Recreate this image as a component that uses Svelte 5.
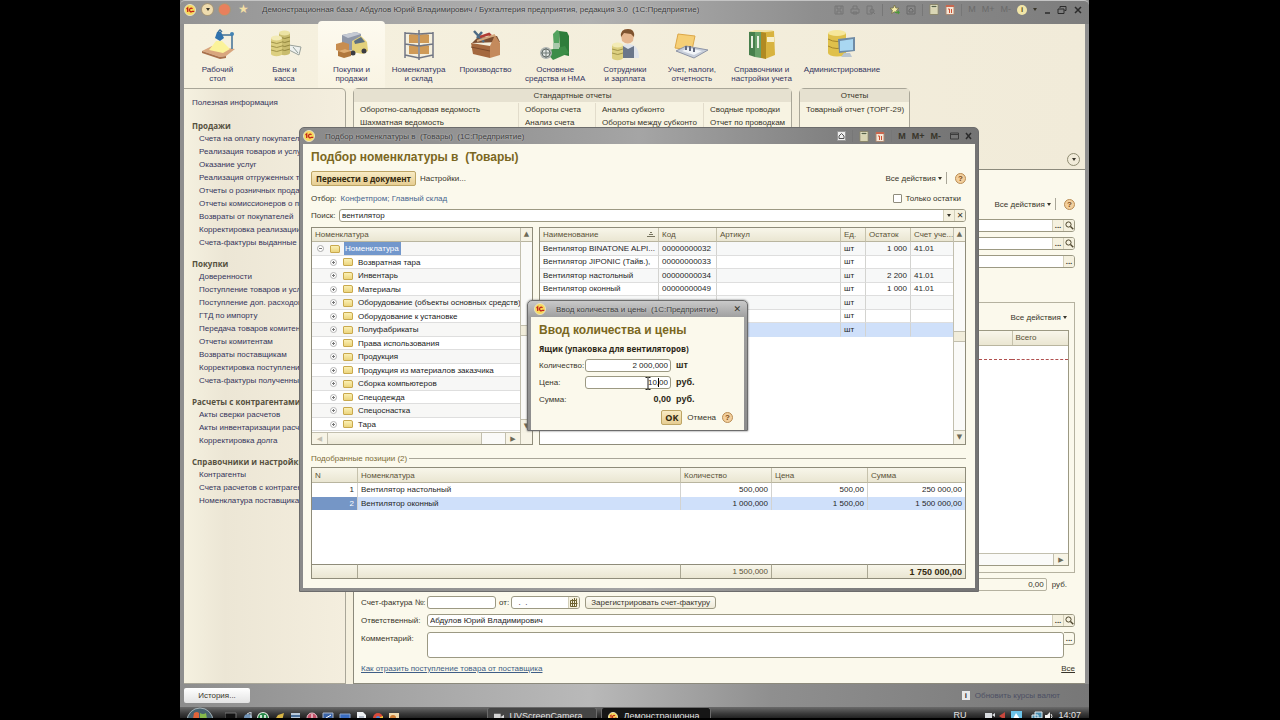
<script>
	const sections = [
		{
			label: ['Рабочий', 'стол'],
			icon: '<path d="M2 22l10-5 23 3-9 7-6 1z" fill="#d9a67e"/><path d="M2 22l18 6 6-1v2l-6 1-18-6z" fill="#a8704c"/><path d="M9 21l7-9h6l8 8-7 4z" fill="#fbf39a"/><path d="M15 9l2-6h4l3 6-4 3z" fill="#2f72ad"/><path d="M18 3l2-2 2 2M22 6h10v14" fill="none" stroke="#3f6f96" stroke-width="1.5"/><circle cx="32" cy="5" r="2" fill="#4383b4"/>'
		},
		{
			label: ['Банк и', 'касса'],
			icon: '<path d="M22 16l12 2-2 8-10-5z" fill="#eef1ee" stroke="#98a09a"/><path d="M26 18l5 6" stroke="#8d9c96"/><path d="M12 4v20a5 2 0 0 0 11 0V4z" fill="#c9bc6e"/><ellipse cx="17.500" cy="4" rx="5.500" ry="2.500" fill="#ece3a3"/><path d="M12 8q6 3 11 0M12 12q6 3 11 0M12 16q6 3 11 0M12 20q6 3 11 0" fill="none" stroke="#94883f"/><path d="M4 9v16a5 2 0 0 0 11 0V9z" fill="#dccf80"/><ellipse cx="9.500" cy="9" rx="5.500" ry="2.500" fill="#f3ebb6"/><path d="M4 13q6 3 11 0M4 17q6 3 11 0M4 21q6 3 11 0" fill="none" stroke="#a2954b"/>'
		},
		{
			label: ['Покупки и', 'продажи'],
			icon: '<path d="M8 6l14-3 5 2v18l-19-3z" fill="#8f97a8"/><path d="M8 6l14-3 5 2-13 4z" fill="#c5cad4"/><path d="M18 12l9-5 6 6 1 9-5 3-11-2z" fill="#e3d17c"/><path d="M20 12l7-4 4 5-10 2z" fill="#5d6f80"/><circle cx="30" cy="22" r="2.500" fill="#3b3b42"/><circle cx="19" cy="24" r="2.500" fill="#3b3b42"/><path d="M2 15l7-2 6 2v6l-7 2-6-2z" fill="#c88d4f"/><path d="M4 22l7-2 6 2v5l-7 2-6-2z" fill="#b0773c"/><path d="M4 22l7-2 6 2-7 2z" fill="#dfae74"/>'
		},
		{
			label: ['Номенклатура', 'и склад'],
			icon: '<path d="M8 6h9v8H8zM19 6h9v8h-9zM8 17h9v8H8zM19 17h9v8h-9z" fill="#cf9a57"/><path d="M8 6l4-1 5 1M19 6l4-1 5 1M8 17l4-1 5 1M19 17l4-1 5 1" fill="#e7bf84" stroke="#a06f36" stroke-width=".5"/><path d="M4 3v26M32 3v26M18 1v30M4 15l14 2 14-2M4 26l14 3 14-3M4 4l14 1 14-1" fill="none" stroke="#717684" stroke-width="1.500"/>'
		},
		{
			label: ['Производство'],
			icon: '<path d="M4 14l5-5 20-2 3 6z" fill="#7a4d31"/><path d="M3 14l19 3v12L5 25z" fill="#a4683f"/><path d="M22 17l5-11 5 8v12l-10 3z" fill="#c48a5c"/><path d="M3 18l19 4" stroke="#7c4a2a"/><path d="M6 2l10 11M14 3L9 9" stroke="#4d6b85" stroke-width="2.500"/><path d="M12 8l9-3 2 2" fill="none" stroke="#b03c33" stroke-width="2.500"/><path d="M9 12L27 6" stroke="#d5a77b" stroke-width="2"/>'
		},
		{
			label: ['Основные', 'средства и НМА'],
			icon: '<path d="M22 2l8 1 2 4v20l-9-2z" fill="#2e7d3b"/><path d="M16 5l4-4 2 1v18h-5z" fill="#54a35f"/><path d="M8 22l20-5 4 7-16 7z" fill="#3c8d48"/><path d="M16 14h6v6h-6z" fill="#a9c9ab"/><circle cx="9" cy="24" r="6" fill="#aeb3b1"/><circle cx="9" cy="24" r="4" fill="#e0e4e1" stroke="#626b66"/><path d="M9 19v10M4 24h10" stroke="#717b76"/>'
		},
		{
			label: ['Сотрудники', 'и зарплата'],
			icon: '<path d="M12 29q-1-13 9-14 11 0 11 14z" fill="#dfe3ea"/><path d="M16 17l5 3 6-3v12H16z" fill="#6a768a"/><path d="M14 6q0-6 7-6 6 0 6 6l-1 6q-5 5-11 0z" fill="#e5b68f"/><path d="M14 8q-1-8 7-8 7 0 6 8l-3-3-7-1z" fill="#7e532f"/><path d="M5 16v13a5 2 0 0 0 11 0V16z" fill="#dccf80"/><ellipse cx="10.500" cy="16" rx="5.500" ry="2.500" fill="#f3ebb6"/><path d="M5 20q6 3 11 0M5 24q6 3 11 0" fill="none" stroke="#a2954b"/>'
		},
		{
			label: ['Учет, налоги,', 'отчетность'],
			icon: '<path d="M4 5l17 2-3 14L1 19z" fill="#f6cf76" stroke="#dca748"/><path d="M2 22l10-5 22 4-14 8z" fill="#c8cfdb" stroke="#8d94a6"/><path d="M8 22l6-3 14 3-8 4z" fill="#f1f4f8"/><path d="M12 17v4M16 17v5M20 19v4" stroke="#646b80" stroke-width="2"/>'
		},
		{
			label: ['Справочники и', 'настройки учета'],
			icon: '<path d="M17 3l13-1 1 24-10 4z" fill="#d8b33f"/><path d="M5 3l6-1v26l-6-2z" fill="#477f4c"/><path d="M11 3l6-1v27l-6-1z" fill="#67a069"/><path d="M17 3l5 1v26l-5-1z" fill="#b08a22"/><path d="M23 8h7v5h-7z" fill="#f7efc9"/><path d="M7 7h2v12H7zM13 7h2v12h-2z" fill="#e9efe0"/><path d="M5 3l6-2h17l2 1-13 1z" fill="#efe1a3"/>'
		},
		{
			label: ['Администрирование'],
			icon: '<path d="M4 4v20a8 3 0 0 0 18 0V4z" fill="#dfc04b"/><ellipse cx="13" cy="4" rx="9" ry="3" fill="#f6e79a"/><path d="M4 10q9 5 18 0M4 17q9 5 18 0" fill="none" stroke="#a7862a"/><path d="M14 10l17-2v14l-16 2z" fill="#6f8ba5"/><path d="M16 12l13-2v11l-13 1z" fill="#a9d7f1"/><path d="M20 24h6l2 4H17z" fill="#b9c4cf"/>'
		}
	];
	const activeSection = 'Покупки и';

	const navGroups = [
		{
			title: 'Продажи',
			items: [
				'Счета на оплату покупателям', 'Реализация товаров и услуг', 'Оказание услуг',
				'Реализация отгруженных товаров', 'Отчеты о розничных продажах',
				'Отчеты комиссионеров о продажах', 'Возвраты от покупателей',
				'Корректировка реализации', 'Счета-фактуры выданные'
			]
		},
		{
			title: 'Покупки',
			items: [
				'Доверенности', 'Поступление товаров и услуг', 'Поступление доп. расходов',
				'ГТД по импорту', 'Передача товаров комитенту', 'Отчеты комитентам',
				'Возвраты поставщикам', 'Корректировка поступления', 'Счета-фактуры полученные'
			]
		},
		{
			title: 'Расчеты с контрагентами',
			items: ['Акты сверки расчетов', 'Акты инвентаризации расчетов', 'Корректировка долга']
		},
		{
			title: 'Справочники и настройки',
			items: ['Контрагенты', 'Счета расчетов с контрагентами', 'Номенклатура поставщика']
		}
	];

	const reports = [
		['Оборотно-сальдовая ведомость', 'Шахматная ведомость'],
		['Обороты счета', 'Анализ счета'],
		['Анализ субконто', 'Обороты между субконто'],
		['Сводные проводки', 'Отчет по проводкам']
	];

	const folders = [
		'Возвратная тара', 'Инвентарь', 'Материалы', 'Оборудование (объекты основных средств)',
		'Оборудование к установке', 'Полуфабрикаты', 'Права использования', 'Продукция',
		'Продукция из материалов заказчика', 'Сборка компьютеров', 'Спецодежда', 'Спецоснастка', 'Тара'
	];

	const goods = [
		{ name: 'Вентилятор BINATONE ALPI...', code: '00000000032', rest: '1 000', account: '41.01' },
		{ name: 'Вентилятор JIPONIC (Тайв.),', code: '00000000033', rest: '', account: '' },
		{ name: 'Вентилятор настольный', code: '00000000034', rest: '2 200', account: '41.01' },
		{ name: 'Вентилятор оконный', code: '00000000049', rest: '1 000', account: '41.01' },
		{ name: '', code: '', rest: '', account: '' },
		{ name: '', code: '', rest: '', account: '' },
		{ name: '', code: '', rest: '', account: '', selected: true }
	];

	const picked = [
		{ name: 'Вентилятор настольный', qty: '500,000', price: '500,00', sum: '250 000,00' },
		{ name: 'Вентилятор оконный', qty: '1 000,000', price: '1 500,00', sum: '1 500 000,00', selected: true }
	];

	let search = 'вентилятор';
	let onlyRest = false;
	let quantity = '2 000,000';
	let price = '10,00';
	let responsible = 'Абдулов Юрий Владимирович';
	let comment = '';
</script>

{#snippet logo()}
	<svg class="logo" viewBox="0 0 12 12" aria-hidden="true">
		<circle cx="6" cy="6" r="5.5" fill="#f8d95c" stroke="#e8e2c4" />
		<path d="M2.500 5l1.200-1v4M8.500 4.700a1.800 1.800 0 1 0 0 2.600h1.800" fill="none" stroke="#c3251c" stroke-width="1.300" />
	</svg>
{/snippet}

{#snippet help()}
	<button class="help" aria-label="Справка">?</button>
{/snippet}

{#snippet lens()}
	<svg width="9" height="9" viewBox="0 0 9 9" aria-hidden="true">
		<circle cx="3.500" cy="3.500" r="2.600" fill="none" stroke="#4c452c" />
		<path d="M5.500 5.500L8.300 8.300" stroke="#4c452c" stroke-width="1.400" />
	</svg>
{/snippet}

{#snippet actions()}
	<button class="plain">Все действия <i class="down"></i></button>
{/snippet}

{#snippet calc()}
	<svg width="10" height="11" viewBox="0 0 10 11" aria-hidden="true">
		<path d="M1 .5h8v10H1z" fill="#f3efd0" stroke="#8c886c" />
		<path d="M2.500 2.500h5" stroke="#57624a" stroke-width="1.500" />
		<path d="M2.500 5h5M2.500 7h5M2.500 9h5" stroke="#8c8a62" stroke-dasharray="1 1" />
	</svg>
	<svg width="10" height="11" viewBox="0 0 10 11" aria-hidden="true">
		<path d="M1 1.500h8v9H1z" fill="#f6e6d6" stroke="#a98873" />
		<path d="M1 2h8" stroke="#c8674f" stroke-width="2" />
		<path d="M3 5h1.500v4M6.500 5v4" fill="none" stroke="#d2502f" />
	</svg>
{/snippet}

<div class="desktop">
	<header class="titlebar">
		{@render logo()}
		<button class="round arrow" aria-label="Главное меню"><i class="down"></i></button>
		<button class="round red" aria-label="Закрыть"></button>
		<span class="star">★</span>
		<span class="caption">Демонстрационная база / Абдулов Юрий Владимирович / Бухгалтерия предприятия, редакция 3.0&nbsp; (1С:Предприятие)</span>
		<div class="tools">
			<svg class="dim" width="10" height="10" viewBox="0 0 10 10" aria-hidden="true"><path d="M1 1h8v8H1zM3 1v3h4V1M3 9V6h4v3" fill="none" stroke="#666" /></svg>
			<svg class="dim" width="10" height="10" viewBox="0 0 10 10" aria-hidden="true"><path d="M1 4h8v4H1zM3 4V1h4v3M3 7h4v2H3z" fill="none" stroke="#666" /></svg>
			<svg class="dim" width="10" height="10" viewBox="0 0 10 10" aria-hidden="true"><path d="M1 1h5v8H1z" fill="none" stroke="#666" /><circle cx="6" cy="6" r="2" fill="none" stroke="#666" /><path d="M7 7l2 2" stroke="#666" /></svg>
			<i class="bar"></i>
			<svg width="11" height="11" viewBox="0 0 11 11" aria-hidden="true"><path d="M5.500 1l1.300 3 3.200.3-2.400 2 .8 3.200-2.900-1.700-2.900 1.700.8-3.200-2.400-2 3.200-.3z" fill="#f5ecaa" stroke="#6d6a3c" stroke-width=".7" /><path d="M6 7.500h3V6l2 2.500-2 2V9H6z" fill="#4c9a3a" /></svg>
			<svg class="dim" width="10" height="10" viewBox="0 0 10 10" aria-hidden="true"><path d="M1 1h8v8H1zM3 5l2-2 2 2v2H3z" fill="none" stroke="#555" /></svg>
			<i class="bar"></i>
			{@render calc()}
			<i class="bar"></i>
			<span class="memory faded"><b>M</b><b>M+</b><b>M-</b></span>
			<span class="info">i</span>
			<i class="down"></i>
			<svg class="winbuttons" width="42" height="10" viewBox="0 0 42 10" aria-hidden="true">
				<path d="M2 8h5" stroke="#2b2b2b" stroke-width="1.500" />
				<path d="M17 3V1.500h6v4h-1.500M15 4h6v4.500h-6z" fill="none" stroke="#2b2b2b" />
				<path d="M32 2l6 6M38 2l-6 6" stroke="#2b2b2b" stroke-width="1.500" />
			</svg>
		</div>
	</header>

	<div class="client">
		<nav class="sections">
			{#each sections as s}
				<button class="section" class:active={s.label[0] === activeSection}>
					<svg width="36" height="32" viewBox="0 0 36 32" aria-hidden="true">{@html s.icon}</svg>
					{#each s.label as line}<span>{line}</span>{/each}
				</button>
			{/each}
		</nav>

		<div class="workspace">
			<nav class="side">
				<a href="#info" class="top">Полезная информация</a>
				{#each navGroups as g}
					<h3>{g.title}</h3>
					<ul>
						{#each g.items as item}
							<li><a href="#nav">{item}</a></li>
						{/each}
					</ul>
				{/each}
			</nav>

			<main>
				<div class="functions">
					<section class="reports">
						<h4>Стандартные отчеты</h4>
						<div class="columns">
							{#each reports as col}
								<div class="column">
									{#each col as r}<a href="#report">{r}</a>{/each}
								</div>
							{/each}
						</div>
					</section>
					<section class="reports narrow">
						<h4>Отчеты</h4>
						<div class="columns">
							<div class="column"><a href="#report">Товарный отчет (ТОРГ-29)</a></div>
						</div>
					</section>
					<button class="collapse" aria-label="Свернуть"><i class="down"></i></button>
				</div>

				<form class="document" on:submit|preventDefault>
					<div class="commands">{@render actions()}<i class="bar"></i>{@render help()}</div>
					<div class="fields">
						<div class="combo"><input aria-label="Контрагент" /><button>...</button><button aria-label="Открыть">{@render lens()}</button></div>
						<div class="combo"><input aria-label="Договор" /><button>...</button><button aria-label="Открыть">{@render lens()}</button></div>
						<div class="combo"><input aria-label="Расчеты" /><button>...</button></div>
					</div>
					<div class="lines">
						<div class="commands">{@render actions()}</div>
						<div class="sheet">
							<table>
								<thead><tr><th></th><th class="total">Всего</th></tr></thead>
								<tbody><tr><td></td><td></td></tr></tbody>
							</table>
							<div class="hscroll"><span class="track"></span><button class="right" aria-label="Вправо">▶</button></div>
						</div>
					</div>
					<div class="sumline">
						<input aria-label="Всего" value="0,00" readonly /><span>руб.</span>
					</div>
					<div class="line">
						<label for="invoice">Счет-фактура №:</label>
						<input id="invoice" class="short" />
						<label for="invoice-date" class="from">от:</label>
						<div class="combo short"><input id="invoice-date" value="  .  ." /><button aria-label="Календарь"><svg width="8" height="9" viewBox="0 0 8 9" aria-hidden="true"><path d="M.5 2.500h6v6h-6zM2.500 1v8M4.500 0v8M6.500.5v2M.5 5.500h7" fill="none" stroke="#6d6230" /></svg></button></div>
						<button class="register">Зарегистрировать счет-фактуру</button>
					</div>
					<div class="line">
						<label for="responsible">Ответственный:</label>
						<div class="combo grow"><input id="responsible" bind:value={responsible} /><button>...</button><button aria-label="Открыть">{@render lens()}</button></div>
					</div>
					<div class="line tall">
						<label for="comment">Комментарий:</label>
						<textarea id="comment" bind:value={comment}></textarea>
						<button class="dots">...</button>
					</div>
					<div class="links">
						<a class="hint" href="#hint">Как отразить поступление товара от поставщика</a>
						<a class="all" href="#all">Все</a>
					</div>
				</form>
			</main>
		</div>
	</div>

	<footer class="status">
		<button class="history">История...</button>
		<span class="rates"><b>i</b>Обновить курсы валют</span>
	</footer>

	<div class="taskbar">
		<svg class="orb" width="28" height="14" viewBox="0 0 28 14" aria-hidden="true">
			<circle cx="14" cy="14" r="13" fill="#48626f" stroke="#a7b3b8" />
			<path d="M8 6q3-2 5 0v6H7z" fill="#e0643a" /><path d="M14 6q3 2 6 0l1 6h-7z" fill="#86b94b" />
			<path d="M7 13h6v1H7z" fill="#4f92d2" /><path d="M14 13h7v1h-7z" fill="#edc54a" />
		</svg>
		<div class="quick">
			<svg width="176" height="10" viewBox="0 0 176 10" aria-hidden="true">
				<path d="M0 1h11v9H0z" fill="#111" stroke="#777" /><path d="M2 7h6" stroke="#c5a76b" stroke-width="2" />
				<circle cx="23" cy="6" r="4" fill="#7295b8" /><path d="M22 2l4-2v6" stroke="#cfd8e0" fill="none" />
				<circle cx="38" cy="6" r="6" fill="#e7eee5" /><circle cx="38" cy="6" r="5" fill="#2b8a4b" /><path d="M36 3v4q2 2 4 0V3" stroke="#fff" fill="none" stroke-width="1.500" />
				<path d="M49 9l4-6 6-2-2 8z" fill="#d8b545" />
				<path d="M66 1h9v9h-9z" fill="#b8c9da" /><path d="M66 4h9" stroke="#4a6f98" stroke-width="2" />
				<circle cx="87" cy="6" r="5" fill="#c5526a" stroke="#e8c2cb" /><path d="M87 2v6" stroke="#fff" />
				<path d="M98 1h10v8H98z" fill="#3963a7" stroke="#aab7cc" /><path d="M101 6l5-3" stroke="#fff" />
				<path d="M115 2h10v7h-10z" fill="#3a6dc0" stroke="#8ca6cc" />
				<path d="M132 0h6l3 3v7h-9z" fill="#edf0f3" /><path d="M134 5h5M134 8h5" stroke="#7d8ba0" />
				<circle cx="153" cy="6" r="5" fill="#d94a3a" /><path d="M153 6l5-2v6h-5z" fill="#f0c83e" /><circle cx="153" cy="6" r="2" fill="#4b86d8" />
				<path d="M164 1h10v9h-10z" fill="#efd9ae" /><circle cx="168" cy="6" r="3" fill="#cf7d34" />
			</svg>
		</div>
		<div class="task">
			<svg width="9" height="8" viewBox="0 0 9 8" aria-hidden="true"><path d="M0 1h6v6H0zM6 4l3-2v5z" fill="#d5d5d5" /></svg>
			UVScreenCamera
		</div>
		<div class="task current">{@render logo()} Демонстрационна...</div>
		<div class="tray">
			<span class="lang">RU</span>
			<svg width="70" height="10" viewBox="0 0 70 10" aria-hidden="true">
				<path d="M1 2h7v6H1zM8 4l3-2v4z" fill="#d9dde0" /><path d="M15 5l6-4v8z" fill="#c9473c" />
				<path d="M27 0h11v10H27z" fill="#6cc3e8" /><path d="M29 8l3-6 4 6z" fill="#fff" />
				<path d="M51 1h7v6h-7zM48 4h6v5h-6z" fill="#4b8fb0" stroke="#dfe9ee" />
				<path d="M61 4h2l3-3v8l-3-2h-2z" fill="#f0f0f0" /><path d="M67 3q2 2 0 5" fill="none" stroke="#eee" />
			</svg>
			<span>14:07</span>
		</div>
	</div>

	<section class="popup picker">
		<header class="popup-title">
			{@render logo()}
			<span class="caption">Подбор номенклатуры в&nbsp; (Товары)&nbsp; (1С:Предприятие)</span>
			<div class="tools">
				<svg width="9" height="10" viewBox="0 0 9 10" aria-hidden="true"><path d="M.5.500h8v9h-8z" fill="#eee" stroke="#999" /><path d="M2 5l2.500-2.500L7 5v2.500H2z" fill="none" stroke="#555" /></svg>
				<i class="bar"></i>
				{@render calc()}
				<i class="bar"></i>
				<span class="memory"><b>M</b><b>M+</b><b>M-</b></span>
				<svg class="winbuttons" width="28" height="10" viewBox="0 0 28 10" aria-hidden="true">
					<path d="M3.500 2h8v6h-8zM3.500 3.500h8" fill="none" stroke="#3c3c3c" />
					<path d="M19 2l5 6M24 2l-5 6" stroke="#2b2b2b" stroke-width="1.500" />
				</svg>
			</div>
		</header>
		<div class="picker-body">
			<h1>Подбор номенклатуры в&nbsp; (Товары)</h1>
			<div class="commands picker-commands">
				<button class="gold">Перенести в документ</button>
				<button class="plain">Настройки...</button>
				<span class="spacer"></span>
				{@render actions()}<i class="bar"></i>{@render help()}
			</div>
			<div class="filter">
				<span>Отбор:</span>
				<a href="#filter">Конфетпром; Главный склад</a>
				<span class="spacer"></span>
				<label><input type="checkbox" bind:checked={onlyRest} />Только остатки</label>
			</div>
			<div class="searchline">
				<label for="search">Поиск:</label>
				<div class="combo grow">
					<input id="search" bind:value={search} />
					<button aria-label="Список"><i class="down"></i></button>
					<button aria-label="Очистить" class="cross">✕</button>
				</div>
			</div>
			<div class="panes">
				<div class="pane tree">
					<div class="pane-main">
						<div class="head">Номенклатура</div>
						<ul>
							<li class="root">
								<svg width="7" height="7" viewBox="0 0 7 7" aria-hidden="true"><circle cx="3.500" cy="3.500" r="3" fill="#fff" stroke="#a9a9a9" /><path d="M2 3.500h3" stroke="#777" /></svg>
								<i class="folder"></i><span class="picked">Номенклатура</span>
							</li>
							{#each folders as f}
								<li>
									<svg width="7" height="7" viewBox="0 0 7 7" aria-hidden="true"><circle cx="3.500" cy="3.500" r="3" fill="#fff" stroke="#b5b5b5" /><path d="M2 3.500h3M3.500 2v3" stroke="#777" /></svg>
									<i class="folder"></i><span>{f}</span>
								</li>
							{/each}
						</ul>
						<div class="hscroll">
							<button class="left" aria-label="Влево">◀</button>
							<span class="thumb"></span><span class="track"></span>
							<button class="right" aria-label="Вправо">▶</button>
						</div>
					</div>
					<div class="vscroll">
						<button aria-label="Вверх">▲</button>
						<span class="track"></span>
						<span class="thumb"></span>
						<span class="track"></span>
						<button aria-label="Вниз">▼</button>
						<span class="corner"></span>
					</div>
				</div>

				<div class="pane list">
					<div class="pane-main">
						<table class="grid goods">
							<colgroup><col class="name" /><col class="code" /><col /><col class="unit" /><col class="rest" /><col class="account" /></colgroup>
							<thead>
								<tr>
									<th>Наименование
										<svg class="sort" width="8" height="6" viewBox="0 0 8 6" aria-hidden="true"><path d="M3 .500h2M2 2.500h4M0 4.500h8" stroke="#77745f" /></svg>
									</th>
									<th>Код</th><th>Артикул</th><th>Ед.</th><th>Остаток</th><th>Счет уче...</th>
								</tr>
							</thead>
							<tbody>
								{#each goods as g}
									<tr class:selected={g.selected}>
										<td>{g.name}</td><td>{g.code}</td><td></td><td>шт</td><td class="num">{g.rest}</td><td>{g.account}</td>
									</tr>
								{/each}
							</tbody>
						</table>
					</div>
					<div class="vscroll">
						<button aria-label="Вверх">▲</button>
						<span class="track"></span>
						<span class="thumb"></span>
						<span class="track"></span>
						<button aria-label="Вниз">▼</button>
					</div>
				</div>
			</div>

			<div class="legend">Подобранные позиции (2)</div>
			<div class="positions">
				<table class="grid">
					<colgroup><col class="n" /><col /><col class="qty" /><col class="price" /><col class="sum" /></colgroup>
					<thead><tr><th>N</th><th>Номенклатура</th><th>Количество</th><th>Цена</th><th>Сумма</th></tr></thead>
					<tbody>
						{#each picked as p, i}
							<tr class:selected={p.selected}>
								<td class="num">{i + 1}</td><td>{p.name}</td><td class="num">{p.qty}</td><td class="num">{p.price}</td><td class="num">{p.sum}</td>
							</tr>
						{/each}
						<tr class="filler"><td colspan="5"></td></tr>
					</tbody>
					<tfoot><tr><td></td><td></td><td class="num">1 500,000</td><td></td><td class="num grand">1 750 000,00</td></tr></tfoot>
				</table>
			</div>
		</div>
	</section>

	<section class="popup entry">
		<header class="popup-title">
			{@render logo()}
			<span class="caption">Ввод количества и цены&nbsp; (1С:Предприятие)</span>
			<button class="close" aria-label="Закрыть">✕</button>
		</header>
		<form class="entry-body" on:submit|preventDefault>
			<h1>Ввод количества и цены</h1>
			<h2>Ящик (упаковка для вентиляторов)</h2>
			<div class="entry-row"><label for="qty">Количество:</label><input id="qty" bind:value={quantity} /><b>шт</b></div>
			<div class="entry-row">
				<label for="price">Цена:</label>
				<span class="edit">
					<input id="price" bind:value={price} />
					<svg class="ibeam" width="6" height="13" viewBox="0 0 6 13" aria-hidden="true"><path d="M.5.500h2L3 1l.5-.5h2M3 1v11M.5 12.500h2L3 12l.5.500h2" fill="none" stroke="#222" /></svg>
					<i class="caret"></i>
				</span>
				<b>руб.</b>
			</div>
			<div class="entry-row"><span class="name">Сумма:</span><b class="value">0,00</b><b>руб.</b></div>
			<div class="entry-buttons">
				<button class="gold ok">OK</button>
				<button class="plain">Отмена</button>
				{@render help()}
			</div>
		</form>
	</section>
</div>

<style>
	:global(body) {
		background: #000;
	}
	.desktop {
		--ui: 'Liberation Sans', Arial, sans-serif;
		--strong: 'Open Sans', 'Noto Sans', sans-serif;
		--line: #a9a698;
		--paper: #fbf9ec;
		position: relative;
		display: flex;
		flex-direction: column;
		height: 100vh;
		margin: 0 191px 0 180px;
		overflow: hidden;
		background: #8f8f8f;
		color: #38352a;
		font: 8px/13px var(--ui);
		white-space: nowrap;
	}
	.desktop * {
		box-sizing: border-box;
	}
	button,
	input,
	textarea {
		margin: 0;
		padding: 0;
		border: 0;
		background: none;
		color: inherit;
		font: inherit;
	}
	ul {
		margin: 0;
		padding: 0;
		list-style: none;
	}
	h1,
	h2,
	h3,
	h4 {
		margin: 0;
	}
	a {
		color: inherit;
		text-decoration: none;
	}
	svg {
		flex: none;
	}
	.spacer {
		flex: 1;
	}
	.down {
		flex: none;
		display: inline-block;
		border: 2px solid transparent;
		border-top: 3px solid #38352a;
		border-bottom: 0;
		vertical-align: middle;
	}
	.bar {
		flex: none;
		width: 1px;
		height: 12px;
		background: #a9a698;
	}

	/* main window frame */
	.titlebar {
		display: flex;
		align-items: center;
		height: 24px;
		padding: 0 4px 6px;
		border-top: 1px solid #c4c4c4;
		border-radius: 5px 5px 0 0;
		background: linear-gradient(90deg, #939393, #a4a4a4 20%, #b1b1b1 45%, #8e8e8e 70%, #7d7d7d);
		flex: none;
	}
	.logo {
		width: 12px;
		height: 12px;
	}
	.round {
		display: flex;
		align-items: center;
		justify-content: center;
		width: 11px;
		height: 11px;
		margin-left: 6px;
		border-radius: 50%;
		background: #efdcae;
		box-shadow: 0 0 0 1px #a89878;
	}
	.round.red {
		background: #e8805c;
	}
	.star {
		width: 24px;
		margin-left: 8px;
		color: #f3dfa4;
		font-size: 12px;
	}
	.caption {
		overflow: hidden;
		color: #3c3c3c;
		text-shadow: 0 0 2px #d8d8d8;
	}
	.tools {
		display: flex;
		align-items: center;
		gap: 6px;
		margin-left: auto;
	}
	.tools .bar {
		background: #777;
	}
	.dim {
		opacity: 0.6;
	}
	.memory {
		display: flex;
		gap: 6px;
		font-size: 9px;
	}
	.memory.faded {
		color: #6a6a6a;
	}
	.memory.faded b {
		font-weight: normal;
	}
	.info {
		width: 10px;
		border-radius: 50%;
		background: #f2e6a8;
		color: #65551d;
		font: bold 8px/10px var(--ui);
		text-align: center;
	}
	.client {
		display: flex;
		flex: 1;
		flex-direction: column;
		min-height: 0;
		margin: 0 4px;
		background: linear-gradient(90deg, #f6f1df, #f1ebd9);
	}
	.sections {
		display: flex;
		flex: none;
		height: 64px;
	}
	.section {
		display: flex;
		flex-direction: column;
		align-items: center;
		min-width: 67px;
		padding: 5px 6px 0;
		color: #34355f;
		line-height: 9px;
	}
	.section svg {
		margin-bottom: 4px;
	}
	.section.active {
		margin-top: -3px;
		padding-top: 8px;
		border-radius: 4px 4px 0 0;
		background: linear-gradient(#fdfaef, #f9f4e3);
	}
	.workspace {
		display: flex;
		flex: 1;
		min-height: 0;
		gap: 7px;
	}
	.side {
		flex: none;
		width: 162px;
		padding: 7px 8px;
		overflow: hidden;
		border: 1px solid var(--line);
		border-left: 0;
		border-radius: 0 5px 0 0;
		background: linear-gradient(90deg, #f5f1e0, #ece6d5 25%, #f4eede);
	}
	.side .top {
		display: block;
		margin-bottom: 10px;
	}
	.side a {
		color: #35355c;
	}
	.side h3 {
		color: #56513f;
		font: bold 8px/13px var(--strong);
	}
	.side ul {
		margin-bottom: 8px;
		padding-left: 7px;
	}
	main {
		display: flex;
		flex: 1;
		flex-direction: column;
		min-width: 0;
	}
	.functions {
		display: flex;
		flex: none;
		gap: 7px;
		height: 81px;
	}
	.reports {
		border: 1px solid var(--line);
		border-radius: 5px 5px 0 0;
		background: #f7f3e2;
	}
	.reports h4 {
		background: #e6e1d0;
		font-weight: normal;
		text-align: center;
	}
	.columns {
		display: flex;
		padding: 1px 0;
	}
	.column {
		display: flex;
		flex-direction: column;
		width: 77px;
		padding-left: 6px;
		border-left: 1px solid #e2dccb;
	}
	.column:first-child {
		width: 164px;
		border-left: 0;
	}
	.column:nth-child(3) {
		width: 108px;
	}
	.column:nth-child(4) {
		width: 88px;
	}
	.reports.narrow .column {
		width: 109px;
	}
	.collapse {
		align-self: flex-end;
		width: 13px;
		height: 13px;
		margin: 0 5px 3px auto;
		border: 1px solid #8f8c72;
		border-radius: 50%;
		line-height: 8px;
	}

	/* document form */
	.document {
		display: flex;
		flex: 1;
		flex-direction: column;
		min-height: 0;
		padding: 27px 10px 8px 7px;
		border: 1px solid #8c8a7c;
		border-width: 1px 0 1px 1px;
		background: var(--paper);
	}
	.commands {
		display: flex;
		align-items: center;
		justify-content: flex-end;
		gap: 4px;
		height: 14px;
	}
	.plain {
		white-space: nowrap;
	}
	.help {
		flex: none;
		width: 11px;
		height: 11px;
		margin-left: 4px;
		border: 1px solid #b98d55;
		border-radius: 50%;
		background: #f3cf9c;
		color: #7b4c18;
		font: bold 8px/9px var(--ui);
		text-align: center;
	}
	.fields {
		display: flex;
		flex-direction: column;
		gap: 5px;
		margin: 8px 0 34px;
	}
	.combo {
		display: flex;
		height: 13px;
		overflow: hidden;
		border: 1px solid #9c9983;
		border-radius: 3px;
		background: #fff;
	}
	.combo input {
		flex: 1;
		min-width: 0;
		padding-left: 2px;
		color: #1d1d1d;
	}
	.combo button {
		display: flex;
		align-items: center;
		justify-content: center;
		width: 11px;
		border-left: 1px solid #d3cfb9;
		background: #f5f1df;
		font-weight: bold;
		line-height: 11px;
	}
	.grow {
		flex: 1;
	}
	.lines {
		display: flex;
		flex: 1;
		flex-direction: column;
		min-height: 0;
		gap: 6px;
		margin-bottom: 5px;
		padding: 7px 5px 6px 6px;
		border: 1px solid #b5b2a0;
	}
	.lines .commands {
		padding-right: 2px;
	}
	.sheet {
		display: flex;
		flex: 1;
		flex-direction: column;
		border: 1px solid #9c9983;
		background: #fff;
	}
	.sheet table {
		width: 100%;
		border-collapse: collapse;
	}
	.sheet th,
	.grid th,
	.head {
		height: 14px;
		padding: 0 3px;
		border-bottom: 1px solid #b9b59f;
		background: linear-gradient(#f8f6ea, #eae6d2);
		color: #5a5237;
		font-weight: normal;
		text-align: left;
	}
	.sheet th,
	.grid th {
		border-left: 1px solid #c6c2ac;
	}
	.sheet .total {
		width: 56px;
	}
	.sheet td {
		height: 14px;
		border-bottom: 1px dashed #b0504f;
	}
	.sheet .hscroll {
		margin-top: auto;
	}
	.hscroll {
		display: flex;
		flex: none;
		height: 12px;
		border-top: 1px solid #c2bfae;
	}
	.hscroll button {
		width: 15px;
		background: #f7f4e6;
		color: #6d6a58;
		font: 7px/10px 'DejaVu Sans', sans-serif;
	}
	.hscroll .left {
		color: #c3c0b2;
	}
	.hscroll .right {
		border-left: 1px solid #c2bfae;
	}
	.track {
		flex: 1;
		background: #fafaf8;
	}
	.sumline {
		display: flex;
		align-items: center;
		justify-content: flex-end;
		gap: 5px;
		margin-bottom: 5px;
		padding-right: 8px;
	}
	.sumline input {
		width: 120px;
		height: 13px;
		padding-right: 2px;
		border: 1px solid #b5b2a0;
		border-radius: 2px;
		text-align: right;
	}
	.line {
		display: flex;
		align-items: center;
		height: 13px;
		margin-bottom: 5px;
	}
	.line > label:first-child {
		flex: none;
		width: 66px;
	}
	.short {
		width: 69px;
		height: 13px;
	}
	input.short {
		border: 1px solid #9c9983;
		border-radius: 3px;
		background: #fff;
	}
	.from {
		margin: 0 2px 0 3px;
	}
	.register {
		width: 131px;
		height: 13px;
		margin-left: 5px;
		border: 1px solid #9c9983;
		border-radius: 3px;
		background: linear-gradient(#fdfcf5, #eeead8);
		line-height: 11px;
	}
	.line.tall {
		align-items: flex-start;
		height: 26px;
		margin-bottom: 4px;
	}
	.line textarea {
		flex: 1;
		height: 26px;
		border: 1px solid #9c9983;
		border-radius: 3px;
		background: #fff;
		resize: none;
	}
	.dots {
		width: 11px;
		height: 13px;
		border: 1px solid #9c9983;
		border-left: 0;
		border-radius: 0 3px 3px 0;
		font-weight: bold;
		line-height: 11px;
	}
	.links {
		display: flex;
		justify-content: space-between;
	}
	.links a {
		text-decoration: underline;
	}
	.hint {
		color: #3f5e86;
	}

	/* status line and taskbar */
	.status {
		display: flex;
		flex: none;
		align-items: center;
		justify-content: space-between;
		height: 23px;
		padding: 0 29px 0 4px;
		background: linear-gradient(90deg, #8d8d8d, #9c9c9c 15%, #b9b9b9 45%, #8f8f8f 65%, #777);
	}
	.history {
		width: 66px;
		height: 15px;
		border-radius: 2px;
		background: linear-gradient(#fff, #e3e3e3);
		line-height: 15px;
	}
	.rates {
		color: #4d5064;
	}
	.rates b {
		margin-right: 5px;
		padding: 0 3px;
		background: #e8e8e8;
		color: #333;
	}
	.taskbar {
		display: flex;
		flex: none;
		height: 13px;
		overflow: hidden;
		border-bottom: 2px solid #000;
		background: linear-gradient(#6b6b6b, #3a3a3a 60%, #222);
		color: #e4e4e4;
		line-height: 18px;
	}
	.orb {
		margin-left: 6px;
	}
	.quick {
		width: 273px;
		padding: 4px 0 0 11px;
	}
	.task {
		width: 110px;
		padding-left: 6px;
		border: 1px solid #6a6a6a;
		border-bottom: 0;
		border-radius: 3px 3px 0 0;
		background: #454545;
		font-size: 9px;
		line-height: 16px;
	}
	.task.current {
		margin-left: 4px;
		background: #161616;
	}
	.task svg {
		width: 10px;
		height: 10px;
		margin-right: 3px;
		vertical-align: middle;
	}
	.tray {
		display: flex;
		gap: 4px;
		margin-left: auto;
		padding-right: 8px;
		font-size: 9px;
		line-height: 16px;
	}
	.tray svg {
		margin-top: 4px;
	}
	.lang {
		margin-right: 14px;
	}

	/* popup windows */
	.popup {
		position: absolute;
		display: flex;
		flex-direction: column;
		padding: 0 3px 3px;
		border: 1px solid #6c6c6c;
		border-radius: 5px 5px 0 0;
	}
	.popup-title {
		display: flex;
		flex: none;
		align-items: center;
		height: 16px;
	}
	.popup-title .caption {
		margin-left: 10px;
	}
	.picker {
		top: 127px;
		left: 119px;
		width: 680px;
		height: 465px;
		background: linear-gradient(90deg, #8a8a8a, #969696 30%, #a5a5a5 50%, #7f7f7f 80%, #747474);
	}
	.picker-body {
		display: flex;
		flex: 1;
		flex-direction: column;
		min-height: 0;
		padding: 5px 9px 9px 8px;
		background: var(--paper);
	}
	h1 {
		color: #7a6721;
		font: bold 12px/16px var(--ui);
	}
	.picker-commands {
		height: 16px;
		margin: 5px 0 6px;
	}
	.gold {
		height: 15px;
		padding: 0 4px;
		border: 1px solid #bda565;
		border-radius: 2px;
		background: linear-gradient(#f8ebc4, #e6cd92);
		color: #33290f;
		font: bold 8px/13px var(--strong);
	}
	.filter {
		display: flex;
		align-items: center;
		gap: 4px;
		height: 13px;
		padding-right: 5px;
	}
	.filter a {
		color: #46648c;
	}
	.filter label {
		display: flex;
		align-items: center;
		gap: 3px;
	}
	input[type='checkbox'] {
		width: 9px;
		height: 9px;
		appearance: none;
		border: 1px solid #8f8c7c;
		border-radius: 1px;
		background: #fff;
	}
	.searchline {
		display: flex;
		align-items: center;
		margin: 4px 0 5px;
	}
	.searchline label {
		width: 28px;
	}
	.panes {
		display: flex;
		gap: 6px;
		height: 218px;
	}
	.pane {
		display: flex;
		border: 1px solid #8f8c7a;
		background: #fff;
	}
	.tree {
		width: 222px;
	}
	.list {
		flex: 1;
	}
	.pane-main {
		display: flex;
		flex: 1;
		flex-direction: column;
		min-width: 0;
	}
	.tree ul {
		flex: 1;
	}
	.tree li {
		display: flex;
		align-items: center;
		height: 13px;
		padding-left: 18px;
		border-bottom: 1px solid #dedede;
		color: #222;
	}
	.tree li:nth-child(odd) {
		height: 14px;
		background: #f7f7f6;
	}
	.tree .root {
		padding-left: 5px;
	}
	.folder {
		flex: none;
		width: 10px;
		height: 8px;
		margin: 0 5px 0 6px;
		border: 1px solid #c9a94d;
		border-radius: 1px 2px 1px 1px;
		background: linear-gradient(#fbf0b4, #ecd57e);
	}
	.tree .picked {
		margin-left: -1px;
		padding: 0 2px 0 1px;
		background: #7297cc;
		color: #fff;
	}
	.tree .hscroll .thumb {
		width: 155px;
		border: 1px solid #c2bfae;
		border-width: 0 1px;
		background: linear-gradient(#f9f7ec, #ece8d6);
	}
	.vscroll {
		display: flex;
		flex: none;
		flex-direction: column;
		width: 12px;
		border-left: 1px solid #c2bfae;
	}
	.vscroll button {
		height: 14px;
		border-bottom: 1px solid #b9b59f;
		background: #f5f2e4;
		color: #6d6a58;
		font: 7px/13px 'DejaVu Sans', sans-serif;
	}
	.vscroll .track + button {
		border-top: 1px solid #c2bfae;
		border-bottom: 0;
	}
	.vscroll .thumb {
		height: 11px;
		border: 1px solid #c2bfae;
		border-width: 1px 0;
		background: #f1eddb;
	}
	.corner {
		height: 11px;
		background: #f7f4e6;
	}
	.grid {
		width: 100%;
		border-spacing: 0;
		table-layout: fixed;
		color: #1f1f1f;
	}
	.grid th:first-child,
	.grid td:first-child {
		border-left: 0;
	}
	.grid td {
		height: 13px;
		padding: 0 3px;
		overflow: hidden;
		border-left: 1px solid #d3d3d0;
		line-height: 12px;
	}
	.grid tr:nth-child(odd) td {
		height: 14px;
	}
	.goods td {
		border-bottom: 1px solid #dedede;
	}
	.goods tr:nth-child(odd) td {
		background: #f7f8f8;
	}
	.grid tbody .selected td {
		border-bottom-color: #cfe0f8;
		background: #cfe0fa;
	}
	.num {
		text-align: right;
	}
	.name {
		width: 118px;
	}
	.code {
		width: 58px;
	}
	.unit {
		width: 25px;
	}
	.rest {
		width: 45px;
	}
	.account {
		width: 43px;
	}
	.sort {
		float: right;
		margin-top: 4px;
	}
	.legend {
		display: flex;
		align-items: center;
		gap: 2px;
		margin: 7px 0 2px;
		color: #7a6a35;
	}
	.legend::after {
		content: '';
		flex: 1;
		height: 1px;
		background: #a9a698;
	}
	.positions {
		display: flex;
		flex: 1;
		border: 1px solid #8f8c7a;
		background: #fff;
	}
	.positions th {
		height: 15px;
	}
	.n {
		width: 45px;
	}
	.qty {
		width: 91px;
	}
	.price {
		width: 96px;
	}
	.sum {
		width: 98px;
	}
	.grid tbody .selected td.num:first-child {
		background: #7596c6;
		color: #fff;
	}
	.grid tr.filler td {
		height: 100%;
	}
	.positions tfoot tr td {
		height: 15px;
		border-top: 1px solid #8f8c7a;
		border-left-color: #aaa793;
		background: linear-gradient(#f8f6ea, #eae6d2);
		color: #5a5237;
	}
	.positions tfoot tr .grand {
		color: #33290f;
		font-weight: bold;
		font-size: 9px;
	}

	.entry {
		top: 300px;
		left: 347px;
		width: 221px;
		height: 131px;
		background: linear-gradient(#c9c9c9, #a0a0a0 16px, #8c8c8c);
		box-shadow: 0 0 2px #555;
	}
	.entry .popup-title {
		padding: 0 3px;
	}
	.close {
		margin-left: auto;
		font: bold 9px/12px 'DejaVu Sans', sans-serif;
	}
	.cross {
		font-family: 'DejaVu Sans', sans-serif;
	}
	.entry-body {
		flex: 1;
		padding: 5px 8px;
		background: var(--paper);
	}
	.entry h2 {
		margin: 4px 0;
		color: #2c2716;
		font: bold 8px/13px var(--strong);
	}
	.entry-row {
		display: flex;
		align-items: center;
		height: 13px;
		margin-bottom: 4px;
	}
	.entry-row label,
	.entry-row .name {
		width: 46px;
	}
	.entry-row input,
	.entry-row .value {
		width: 86px;
		height: 13px;
		padding-right: 2px;
		text-align: right;
	}
	.entry-row input {
		border: 1px solid #9c9983;
		border-radius: 3px;
		background: #fff;
		color: #1d1d1d;
	}
	.entry-row .value {
		padding-right: 0;
	}
	.entry-row b {
		color: #2c2716;
		font-size: 9px;
	}
	.entry-row b:last-child {
		margin-left: 5px;
	}
	.edit {
		position: relative;
		display: flex;
	}
	.ibeam {
		position: absolute;
		top: 1px;
		right: 20px;
	}
	.caret {
		position: absolute;
		top: 2px;
		right: 12px;
		width: 1px;
		height: 9px;
		background: #000;
	}
	.entry-buttons {
		display: flex;
		align-items: center;
		justify-content: flex-end;
		gap: 5px;
		padding-right: 3px;
	}
	.entry-buttons .help {
		margin-left: 1px;
	}
	.ok {
		width: 21px;
		padding: 0;
		font-size: 9px;
	}
</style>
